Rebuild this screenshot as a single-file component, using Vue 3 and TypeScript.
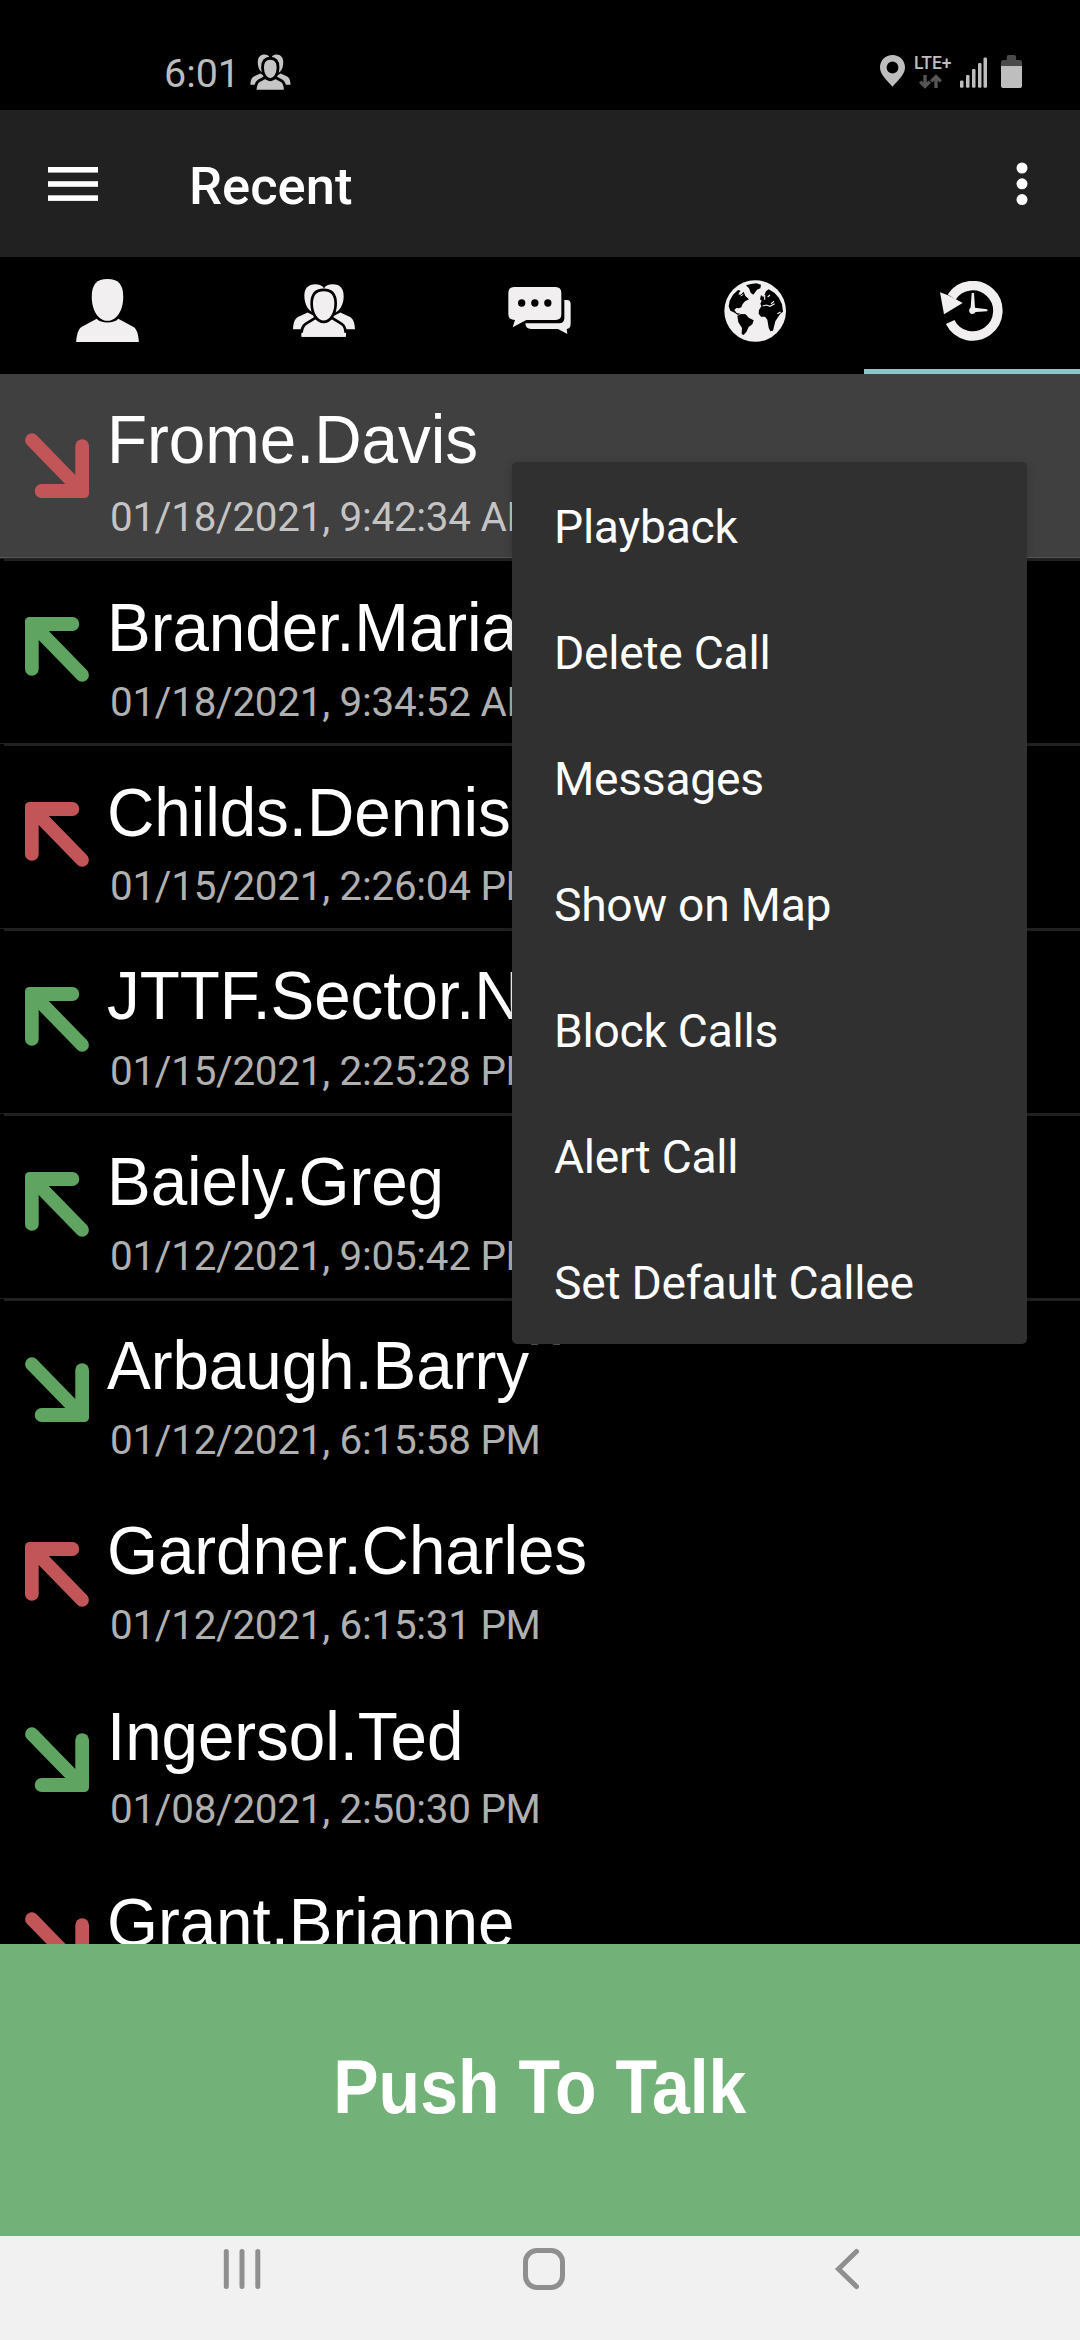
<script setup lang="ts">
interface Call {
  name: string
  time?: string
  tone: 'red' | 'green'
  outgoing: boolean
  nameTop: number
  timeTop: number
}

const calls: Call[] = [
  { name: 'Frome.Davis', time: '01/18/2021, 9:42:34 AM', tone: 'red', outgoing: false, nameTop: 30, timeTop: 120 },
  { name: 'Brander.Maria', time: '01/18/2021, 9:34:52 AM', tone: 'green', outgoing: true, nameTop: 34, timeTop: 121 },
  { name: 'Childs.Dennis', time: '01/15/2021, 2:26:04 PM', tone: 'red', outgoing: true, nameTop: 34, timeTop: 120 },
  { name: 'JTTF.Sector.N', time: '01/15/2021, 2:25:28 PM', tone: 'green', outgoing: true, nameTop: 32, timeTop: 120 },
  { name: 'Baiely.Greg', time: '01/12/2021, 9:05:42 PM', tone: 'green', outgoing: true, nameTop: 33, timeTop: 120 },
  { name: 'Arbaugh.Barry', time: '01/12/2021, 6:15:58 PM', tone: 'green', outgoing: false, nameTop: 32, timeTop: 119 },
  { name: 'Gardner.Charles', time: '01/12/2021, 6:15:31 PM', tone: 'red', outgoing: true, nameTop: 32, timeTop: 119 },
  { name: 'Ingersol.Ted', time: '01/08/2021, 2:50:30 PM', tone: 'green', outgoing: false, nameTop: 33, timeTop: 118 },
  { name: 'Grant.Brianne', tone: 'red', outgoing: false, nameTop: 34, timeTop: 119 },
]

const menu: string[] = [
  'Playback',
  'Delete Call',
  'Messages',
  'Show on Map',
  'Block Calls',
  'Alert Call',
  'Set Default Callee',
]
</script>

<template>
  <div class="screen">
    <header class="status">
      <span class="clock">6:01</span>
      <svg class="status-group" width="41" height="36" viewBox="874 552 190 161" preserveAspectRatio="none">
        <g fill="#c6c6c6">
          <path d="M943 554C960 554 968 566 968 590C968 620 955 640 940 640C922 635 910 615 910 588C910 566 922 554 943 554Z" />
          <path d="M995 554C1018 554 1028 568 1028 590C1028 615 1016 636 998 640C982 640 970 620 970 590C970 566 978 554 995 554Z" />
          <path d="M876 689C877 665 884 655 894 651L922 639L960 660V689Z" />
          <path d="M1062 689C1061 665 1054 655 1044 651L1016 639L978 660V689Z" />
          <g stroke="#000" stroke-width="13">
            <path d="M897 718C899 690 904 679 914 673L942 658H994L1022 673C1032 679 1037 690 1038 718Z" />
            <path d="M968 571C994 571 1004 588 1004 612C1004 642 988 667 968 667C948 667 932 642 932 612C932 588 942 571 968 571Z" />
          </g>
        </g>
      </svg>
      <div class="status-right">
        <svg width="25" height="32" viewBox="0 0 25 32">
          <path d="M12.5 0C5.6 0 0 5.4 0 12.3C0 19 5.3 23.8 12.5 31.7C19.7 23.8 25 19 25 12.3C25 5.4 19.4 0 12.5 0ZM12.5 6.6A5.9 5.9 0 1 1 12.5 18.4A5.9 5.9 0 1 1 12.5 6.6Z" fill="#bebebe" fill-rule="evenodd" />
        </svg>
        <div class="lte">
          <span>LTE+</span>
          <svg width="23" height="15" viewBox="0 0 23 15" fill="none" stroke="#555" stroke-width="3.4">
            <path d="M6 1V12M1.2 7.6L6 12.4L10.8 7.6M17 14V3M12.2 7.4L17 2.6L21.8 7.4" />
          </svg>
        </div>
        <svg class="signal" width="27" height="31" viewBox="0 0 27 31" fill="#bebebe">
          <rect x="0" y="23.5" width="3.5" height="7.2" rx="1.3" />
          <rect x="6" y="18" width="3.5" height="12.7" rx="1.3" />
          <rect x="12" y="12" width="3.5" height="18.7" rx="1.3" />
          <rect x="18" y="6" width="3.5" height="24.7" rx="1.3" />
          <rect x="23.500" y="0.5" width="3.5" height="30.2" rx="1.3" />
        </svg>
        <svg class="battery" width="21" height="33" viewBox="0 0 21 33">
          <path d="M5.7 5V2Q5.7 0 7.5 0H13.3Q15 0 15 2V5H19Q21 5 21 7V12H0V7Q0 5 2 5Z" fill="#4a4a4a" />
          <path d="M0 11H21V31Q21 33 19 33H2Q0 33 0 31Z" fill="#bebebe" />
        </svg>
      </div>
    </header>

    <div class="appbar">
      <svg width="50" height="34" viewBox="0 0 50 34" fill="#fff">
        <rect y="0" width="50" height="5.6" />
        <rect y="14.2" width="50" height="5.6" />
        <rect y="28.3" width="50" height="5.6" />
      </svg>
      <h1>Recent</h1>
      <svg class="dots" width="12" height="44" viewBox="0 0 12 44" fill="#fff">
        <circle cx="6" cy="6" r="5.5" />
        <circle cx="6" cy="21.8" r="5.5" />
        <circle cx="6" cy="37.6" r="5.5" />
      </svg>
    </div>

    <nav class="tabs">
      <div class="tab">
        <svg width="63" height="63" viewBox="228 536 189 190" fill="#f1eff0">
          <path d="M322 536C355 536 370 552 370 590C370 630 350 662 322 662C295 662 275 630 275 590C275 552 290 536 322 536Z" />
          <path d="M228 726C230 700 236 686 244 681L290 656C302 671 343 671 355 656L401 681C409 686 416 700 417 726Z" />
        </svg>
      </div>
      <div class="tab">
        <svg width="62" height="53" viewBox="876 554 186 158" fill="#f1eff0">
          <path d="M943 554C955 554 964 558 969 566C966 600 955 640 940 640C922 635 910 615 910 588C910 566 922 554 943 554Z" />
          <path d="M995 554C1018 554 1028 568 1028 590C1028 615 1016 636 998 640C982 640 970 600 969 566C974 558 982 554 995 554Z" />
          <path d="M876 689C877 665 884 655 894 651L920 639L960 660V689Z" />
          <path d="M1062 689C1061 665 1054 655 1044 651L1018 639L978 660V689Z" />
          <path d="M900 716C901 690 904 679 914 673L942 656H994L1022 673C1032 679 1034 690 1035 716Z" stroke="#000" stroke-width="8" />
          <rect x="901" y="700" width="134" height="12" />
          <path d="M968 571C994 571 1004 588 1004 612C1004 642 988 667 968 667C948 667 932 642 932 612C932 588 942 571 968 571Z" stroke="#000" stroke-width="8" />
        </svg>
      </div>
      <div class="tab">
        <svg width="63" height="47" viewBox="143 110 189 141">
          <path d="M161 110H286Q303 110 303 128V192Q303 209 286 209H198L157 231L164 209Q144 209 144 192V128Q144 110 161 110Z" fill="#f1eff0" />
          <path d="M312 149H320Q331 149 331 162V220Q331 234 319 236L321 251L293 236H212Q196 236 195 219H296Q312 219 312 204Z" fill="#f1eff0" />
          <circle cx="184" cy="158" r="11" />
          <circle cx="223.500" cy="158" r="11" />
          <circle cx="262.500" cy="158" r="11" />
        </svg>
      </div>
      <div class="tab">
        <svg width="63" height="62" viewBox="791 89 189 186">
          <circle cx="884.500" cy="182" r="92.500" fill="#f1eff0" />
          <path d="M857 105L872 101L888 99L902 103L900 114L890 118L879 133L871 127L866 114Z" />
          <path d="M833 119L841 121L835 129L840 134L850 124L855 137L866 147L854 153L847 161L843 171L835 174L828 173L822 179L829 188L840 190L833 194L820 186L810 181L805 168L808 151L818 133Z" />
          <path d="M831 196L842 191L856 192L865 202L880 210L876 222L865 230L858 245L850 254L844 251L845 233L834 216Z" />
          <path d="M917 123L925 117L943 128L956 143L965 162L968 184L960 190L953 201L945 213L938 241L930 243L925 232L921 208L914 199L902 199L895 190L896 179L903 168L900 160L904 151L899 147L902 134L909 141Z" />
          <path d="M907 167L918 164L929 168L943 160M941 153L932 160M913 133V148M922 140L929 134M951 190L961 185" fill="none" stroke="#f1eff0" stroke-width="3.500" />
          <path d="M835 132L845 127M841 137L849 132" fill="none" stroke="#f1eff0" stroke-width="3" />
        </svg>
      </div>
      <div class="tab active">
        <svg width="63" height="60" viewBox="240 450 189 180">
          <path d="M270.500 573A75.500 75.500 0 1 0 275 498" fill="none" stroke="#f1eff0" stroke-width="28.500" />
          <path d="M240 484L264 493L288 505L308 516L252 550Z" fill="#f1eff0" />
          <path d="M335 487Q338.500 484 342 487L345 530L381 535Q385 538 381 541L347 543Q342 550 335 549Q325 545 328 535L332 529Z" fill="#f1eff0" />
        </svg>
      </div>
    </nav>

    <main class="list">
      <article v-for="(c, i) in calls" :key="c.name" class="row" :class="{ selected: i === 0, ruled: i > 0 && i < 6 }">
        <svg class="arrow" :class="[c.tone, { outgoing: c.outgoing }]" width="64" height="65" viewBox="0 0 64 65">
          <path d="M6.800 7L55 56.500" stroke="currentColor" stroke-width="13.400" stroke-linecap="round" />
          <rect x="50.300" y="6.300" width="13.700" height="58" rx="6.800" fill="currentColor" />
          <rect x="9.800" y="51" width="53" height="14" rx="6.800" fill="currentColor" />
          <rect x="46" y="47" width="18" height="18" rx="4.500" fill="currentColor" />
        </svg>
        <div class="name" :style="{ paddingTop: c.nameTop + 'px' }">{{ c.name }}</div>
        <div v-if="c.time" class="time" :style="{ paddingTop: c.timeTop + 'px' }">{{ c.time }}</div>
      </article>
    </main>

    <button class="ptt" type="button"><span>Push To Talk</span></button>

    <footer class="navbar">
      <svg width="38" height="42" viewBox="0 0 38 42" stroke="#8f8f8f" stroke-width="5" stroke-linecap="round">
        <path d="M3.300 3.500V38.500M19 3.500V38.500M34.800 3.500V38.500" />
      </svg>
      <svg class="home" width="42" height="42" viewBox="0 0 42 42" fill="none" stroke="#8f8f8f" stroke-width="5">
        <rect x="2.500" y="2.500" width="37" height="37" rx="11.500" />
      </svg>
      <svg class="back" width="26" height="42" viewBox="0 0 26 42" fill="none" stroke="#8f8f8f" stroke-width="5" stroke-linecap="round">
        <path d="M22.500 3.500L4.500 21L22.500 38.500" />
      </svg>
    </footer>

    <ul class="menu">
      <li v-for="item in menu" :key="item">{{ item }}</li>
    </ul>
  </div>
</template>

<style>
body {
  margin: 0;
  background: #000;
}
</style>

<style scoped>
.screen {
  position: relative;
  display: flex;
  flex-direction: column;
  width: 1080px;
  height: 2340px;
  overflow: hidden;
  background: #000;
  color: #fff;
  font-family: Roboto, sans-serif;
}
svg {
  display: block;
  flex: none;
}
.status {
  display: flex;
  box-sizing: border-box;
  height: 110px;
  padding: 54px 58px 0 164px;
  align-items: flex-start;
}
.clock {
  width: 86px;
  font-size: 39.4px;
  line-height: 40px;
  color: #bcbcbc;
}
.status-right {
  display: flex;
  margin-left: auto;
  padding-top: 1px;
  align-items: flex-start;
}
.lte {
  width: 45px;
  margin-left: 9px;
  font-size: 17.5px;
  line-height: 17px;
  font-weight: 500;
  color: #bebebe;
}
.lte span {
  display: block;
  height: 19px;
}
.lte svg {
  margin-left: 5px;
}
.signal {
  margin: 2px 0 0 1px;
}
.battery {
  margin-left: 14px;
}
.appbar {
  display: flex;
  box-sizing: border-box;
  height: 147px;
  padding: 0 52px 0 48px;
  align-items: center;
  background: #212121;
}
h1 {
  margin: 4px 0 0 91px;
  font-size: 52.5px;
  line-height: 62px;
  font-weight: 500;
}
.dots {
  margin-left: auto;
}
.tabs {
  display: flex;
  height: 117px;
}
.tab {
  display: flex;
  box-sizing: border-box;
  width: 216px;
  padding: 0 1px 10px 0;
  align-items: center;
  justify-content: center;
}
.tab.active {
  padding: 0 1px 5px 0;
  border-bottom: 5px solid #80cbc4;
}
.list {
  height: 1570px;
  overflow: hidden;
}
.row {
  display: grid;
  grid-template-columns: 107px 1fr;
  box-sizing: border-box;
  height: 185px;
}
.row > * {
  grid-row: 1;
}
.row.selected {
  height: 184px;
  border-bottom: 1px solid #555;
  background: #404040;
}
.row.ruled {
  background: linear-gradient(#212121, #212121) 4px 0 / 100% 3px no-repeat,
    linear-gradient(#212121, #212121) 0 0 / 4px 1px no-repeat;
}
.arrow {
  grid-column: 1;
  margin: 59px 0 0 25px;
  fill: none;
}
.arrow.red {
  color: #c25558;
}
.arrow.green {
  color: #5fa561;
}
.arrow.outgoing {
  transform: rotate(180deg);
}
.name {
  grid-column: 2;
  font-family: "Liberation Sans", Arial, sans-serif;
  font-size: 65.6px;
  line-height: 74px;
  letter-spacing: -0.08px;
  white-space: nowrap;
  transform: scaleY(1.04);
  transform-origin: 0 92px;
}
.time {
  grid-column: 2;
  margin-left: 3px;
  font-size: 40.4px;
  line-height: 48px;
  letter-spacing: -0.28px;
  color: #b0b0b0;
  white-space: nowrap;
}
.selected .time {
  color: #c4c4c4;
}
.ptt {
  height: 292px;
  padding: 0 0 7px;
  border: 0;
  background: #72b177;
  color: #fff;
  font: bold 76px/80px "Liberation Sans", Arial, sans-serif;
}
.ptt span {
  display: inline-block;
  transform: scaleX(0.895);
}
.navbar {
  display: flex;
  box-sizing: border-box;
  height: 104px;
  padding: 12px 0 0 223px;
  align-items: flex-start;
  background: #f1f1f1;
}
.home {
  margin-left: 262px;
}
.back {
  margin-left: 269px;
}
.menu {
  position: absolute;
  top: 462px;
  left: 512px;
  width: 515px;
  height: 882px;
  margin: 0;
  padding: 0;
  border-radius: 5px;
  background: #303030;
  list-style: none;
  box-shadow: 0 2px 8px rgba(0, 0, 0, 0.2);
}
.menu::after {
  content: "";
  position: absolute;
  top: 882px;
  left: 19px;
  width: 29px;
  height: 1px;
  background: linear-gradient(90deg, #4c4c4c 7px, transparent 7px 22px, #4c4c4c 22px);
}
.menu li {
  box-sizing: border-box;
  height: 126px;
  padding: 5px 0 0 42px;
  font-size: 46.2px;
  line-height: 121px;
  letter-spacing: -0.26px;
}
</style>
